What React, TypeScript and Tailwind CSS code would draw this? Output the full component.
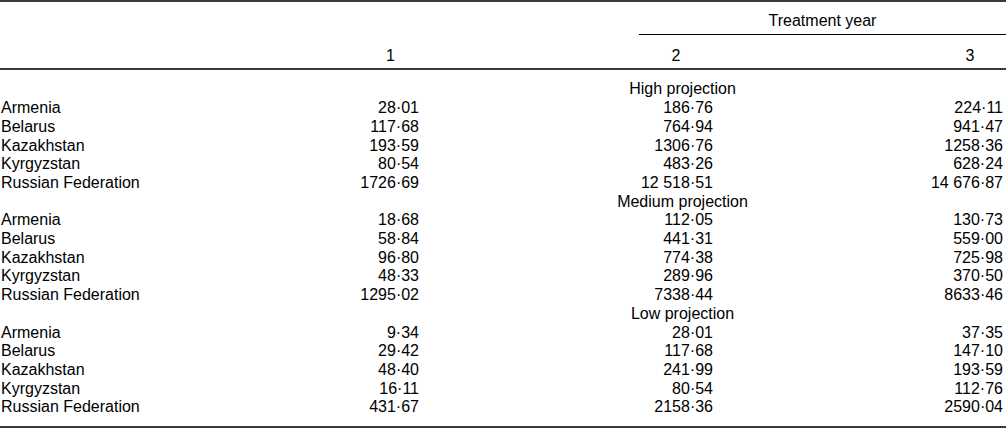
import React from "react";

type Row = [string, string, string, string];

const groups: { title: string; rows: Row[] }[] = [
  {
    title: "High projection",
    rows: [
      ["Armenia", "28·01", "186·76", "224·11"],
      ["Belarus", "117·68", "764·94", "941·47"],
      ["Kazakhstan", "193·59", "1306·76", "1258·36"],
      ["Kyrgyzstan", "80·54", "483·26", "628·24"],
      ["Russian Federation", "1726·69", "12 518·51", "14 676·87"],
    ],
  },
  {
    title: "Medium projection",
    rows: [
      ["Armenia", "18·68", "112·05", "130·73"],
      ["Belarus", "58·84", "441·31", "559·00"],
      ["Kazakhstan", "96·80", "774·38", "725·98"],
      ["Kyrgyzstan", "48·33", "289·96", "370·50"],
      ["Russian Federation", "1295·02", "7338·44", "8633·46"],
    ],
  },
  {
    title: "Low projection",
    rows: [
      ["Armenia", "9·34", "28·01", "37·35"],
      ["Belarus", "29·42", "117·68", "147·10"],
      ["Kazakhstan", "48·40", "241·99", "193·59"],
      ["Kyrgyzstan", "16·11", "80·54", "112·76"],
      ["Russian Federation", "431·67", "2158·36", "2590·04"],
    ],
  },
];

const gridCols = "grid grid-cols-[362px_57px_220px_74px_224px_66px_3px]";
const num = "flex justify-end whitespace-nowrap";

export default function App() {
  return (
    <div
      className="w-[1006px] h-[428px] bg-white text-black text-[16px] leading-[18.7px] overflow-hidden"
      style={{ fontFamily: '"Liberation Sans", Arial, Helvetica, sans-serif' }}
    >
      <div className="h-[2px] bg-[#3a3a3a]" />
      <div className={`${gridCols} mt-[10px]`}>
        <div className="col-start-4 col-end-8 text-center">Treatment year</div>
      </div>
      <div className={`${gridCols} mt-[3px]`}>
        <div className="col-start-4 col-end-8 h-[1px] bg-black" />
      </div>
      <div className={`${gridCols} mt-[12px]`}>
        <div />
        <div className="text-center">1</div>
        <div />
        <div className="text-center">2</div>
        <div />
        <div className="text-center">3</div>
        <div />
      </div>
      <div className="h-[2px] bg-[#3a3a3a] mt-[3px]" />
      <div className="mt-[10px]">
        {groups.map((g) => (
          <div key={g.title}>
            <div className={gridCols}>
              <div className="col-start-2 col-end-7 text-center">{g.title}</div>
            </div>
            {g.rows.map((r, i) => (
              <div key={i} className={gridCols}>
                <div className="pl-[1px] whitespace-nowrap">{r[0]}</div>
                <div className={num}>
                  <span>{r[1]}</span>
                </div>
                <div />
                <div className={num}>
                  <span>{r[2]}</span>
                </div>
                <div />
                <div className={num}>
                  <span>{r[3]}</span>
                </div>
                <div />
              </div>
            ))}
          </div>
        ))}
      </div>
      <div className="h-[2px] bg-[#3a3a3a] mt-[9px]" />
    </div>
  );
}
